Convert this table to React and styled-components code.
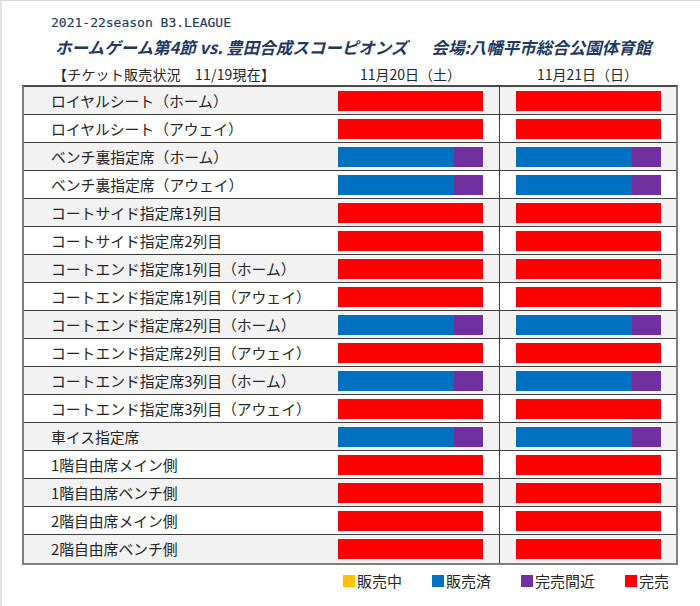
import styled, { createGlobalStyle } from 'styled-components'

const GlobalStyle = createGlobalStyle`
  html, body {
    margin: 0;
    padding: 0;
    background: #ffffff;
  }
  body {
    font-family: "Noto Sans CJK JP", "Noto Sans", sans-serif;
  }
`

const rows = [
  { label: 'ロイヤルシート（ホーム）', status: 'sold' },
  { label: 'ロイヤルシート（アウェイ）', status: 'sold' },
  { label: 'ベンチ裏指定席（ホーム）', status: 'near' },
  { label: 'ベンチ裏指定席（アウェイ）', status: 'near' },
  { label: 'コートサイド指定席1列目', status: 'sold' },
  { label: 'コートサイド指定席2列目', status: 'sold' },
  { label: 'コートエンド指定席1列目（ホーム）', status: 'sold' },
  { label: 'コートエンド指定席1列目（アウェイ）', status: 'sold' },
  { label: 'コートエンド指定席2列目（ホーム）', status: 'near' },
  { label: 'コートエンド指定席2列目（アウェイ）', status: 'sold' },
  { label: 'コートエンド指定席3列目（ホーム）', status: 'near' },
  { label: 'コートエンド指定席3列目（アウェイ）', status: 'sold' },
  { label: '車イス指定席', status: 'near' },
  { label: '1階自由席メイン側', status: 'sold' },
  { label: '1階自由席ベンチ側', status: 'sold' },
  { label: '2階自由席メイン側', status: 'sold' },
  { label: '2階自由席ベンチ側', status: 'sold' },
]

const legend = [
  { color: '#ffc000', label: '販売中' },
  { color: '#0070c0', label: '販売済' },
  { color: '#7030a0', label: '完売間近' },
  { color: '#ff0000', label: '完売' },
]

const StatusBar = ({ status }) => (
  <Bar>
    {status === 'near' ? (
      <>
        <Segment $color="#0070c0" $grow={4} />
        <Segment $color="#7030a0" $grow={1} />
      </>
    ) : (
      <Segment $color="#ff0000" $grow={1} />
    )}
  </Bar>
)

const App = () => {
  return (
    <Page>
      <GlobalStyle />
      <Header>
        <Season>2021-22season B3.LEAGUE</Season>
        <Title>
          <span>ホームゲーム第4節 vs. 豊田合成スコーピオンズ</span>
          <span>会場:八幡平市総合公園体育館</span>
        </Title>
      </Header>
      <SubHeader>
        <Caption>【チケット販売状況　11/19現在】</Caption>
        <DateHead>11月20日（土）</DateHead>
        <DateHead>11月21日（日）</DateHead>
      </SubHeader>
      <Table>
        {rows.map((row, i) => (
          <Row key={row.label} $shaded={i % 2 === 0} $last={i === rows.length - 1}>
            <Label>{row.label}</Label>
            <Cell>
              <StatusBar status={row.status} />
            </Cell>
            <Cell $divider>
              <StatusBar status={row.status} />
            </Cell>
          </Row>
        ))}
      </Table>
      <Legend>
        {legend.map((item) => (
          <LegendItem key={item.label}>
            <Swatch $color={item.color} />
            {item.label}
          </LegendItem>
        ))}
      </Legend>
    </Page>
  )
}
export default App

const Page = styled.div`
  width: 700px;
  height: 606px;
  box-sizing: border-box;
  border-top: 1px solid #dadada;
  border-left: 2px solid #e4e4e4;
  padding-top: 12px;
`

const Header = styled.div`
  padding-left: 49px;
  color: #1f3864;
`

const Season = styled.div`
  font-family: "DejaVu Sans Mono", "Liberation Mono", monospace;
  font-size: 13px;
  line-height: 20px;
  -webkit-text-stroke: 0.15px #1f3864;
`

const Title = styled.div`
  margin-top: 1px;
  padding-left: 4px;
  display: flex;
  gap: 24px;
  font-size: 16.5px;
  line-height: 26px;
  font-weight: 700;
  font-style: italic;
`

const SubHeader = styled.div`
  margin-top: 3px;
  height: 22px;
  display: grid;
  grid-template-columns: 298px 177px 177px;
  margin-left: 22px;
  font-size: 14px;
  line-height: 22px;
  color: #262626;
`

const Caption = styled.div`
  padding-left: 29px;
  white-space: nowrap;
  letter-spacing: 0.2px;
`

const DateHead = styled.div`
  text-align: center;
`

const Table = styled.div`
  margin-left: 20px;
  width: 656px;
  box-sizing: border-box;
  border: 2px solid #7f7f7f;
  border-top-color: #4a4a4a;
`

const Row = styled.div`
  display: grid;
  grid-template-columns: 298px 177px 1fr;
  height: 28px;
  box-sizing: border-box;
  border-bottom: ${(p) => (p.$last ? 'none' : '1px solid #3f3f3f')};
  background: ${(p) => (p.$shaded ? '#f2f2f2' : '#ffffff')};
`

const Label = styled.div`
  padding-left: 27px;
  font-size: 14.8px;
  line-height: 27px;
  color: #262626;
  white-space: nowrap;
`

const Cell = styled.div`
  display: flex;
  align-items: center;
  justify-content: center;
  border-left: ${(p) => (p.$divider ? '1px solid #3f3f3f' : 'none')};
`

const Bar = styled.div`
  width: 145px;
  height: 20px;
  display: flex;
  box-shadow: 0 0 0 1px rgba(255, 255, 255, 0.5);
`

const Segment = styled.div`
  flex: ${(p) => p.$grow};
  background: ${(p) => p.$color};
`

const Legend = styled.div`
  margin-top: 8px;
  padding-left: 341px;
  display: flex;
  gap: 30px;
  font-size: 15px;
  line-height: 16px;
  color: #262626;
`

const LegendItem = styled.div`
  display: flex;
  align-items: center;
  gap: 2px;
`

const Swatch = styled.span`
  width: 12px;
  height: 12px;
  background: ${(p) => p.$color};
`
